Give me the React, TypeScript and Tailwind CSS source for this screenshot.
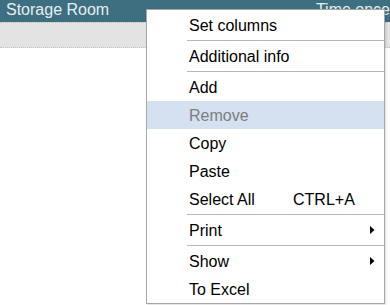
import React from "react";

type Item =
  | { kind: "sep" }
  | { kind: "item"; label: string; shortcut?: string; sub?: boolean; disabled?: boolean; active?: boolean };

const menu: Item[] = [
  { kind: "item", label: "Set columns" },
  { kind: "sep" },
  { kind: "item", label: "Additional info" },
  { kind: "sep" },
  { kind: "item", label: "Add" },
  { kind: "item", label: "Remove", disabled: true, active: true },
  { kind: "item", label: "Copy" },
  { kind: "item", label: "Paste" },
  { kind: "item", label: "Select All", shortcut: "CTRL+A" },
  { kind: "sep" },
  { kind: "item", label: "Print", sub: true },
  { kind: "sep" },
  { kind: "item", label: "Show", sub: true },
  { kind: "item", label: "To Excel" },
];

export default function App() {
  return (
    <div className="relative w-[390px] h-[305px] bg-white overflow-hidden font-['Liberation_Sans',Arial,sans-serif]">
      {/* grid header */}
      <div className="h-[22px] bg-[#3d6f81] flex items-start text-[16px] leading-[20px] text-[#e6eef1]">
        <span className="pl-[6px] w-[318px]">Storage Room</span>
        <span className="whitespace-nowrap">Time once</span>
      </div>
      <div className="h-[26px] bg-[#e3e3e3] border-y border-dotted border-[#c2c2c2]" />

      {/* context menu */}
      <div className="absolute left-[146px] top-[9px] w-[239px] bg-white border border-[#a7a7a7] shadow-[1px_1px_2px_rgba(0,0,0,0.15)] pt-[1px]">
        {menu.map((it, i) =>
          it.kind === "sep" ? (
            <div key={i} className="h-[3px] flex items-center pl-[40px]">
              <div className="h-px w-full bg-[#b8b8b8]" />
            </div>
          ) : (
            <div
              key={i}
              className={`h-[28px] flex items-center pl-[42px] pr-[8px] pt-[2px] text-[16px] leading-[26px] ${
                it.active ? "bg-[#d5e0f1]" : ""
              } ${it.disabled ? "text-[#7d7d7d]" : "text-black"}`}
            >
              <span className="w-[104px] whitespace-nowrap">{it.label}</span>
              {it.shortcut && <span className="whitespace-nowrap">{it.shortcut}</span>}
              {it.sub && (
                <svg className="ml-auto mr-[1px] -mt-[2px]" width="5" height="8" viewBox="0 0 5 8">
                  <path d="M0 0 L4.5 4 L0 8 Z" fill="#000" />
                </svg>
              )}
            </div>
          )
        )}
      </div>
    </div>
  );
}
